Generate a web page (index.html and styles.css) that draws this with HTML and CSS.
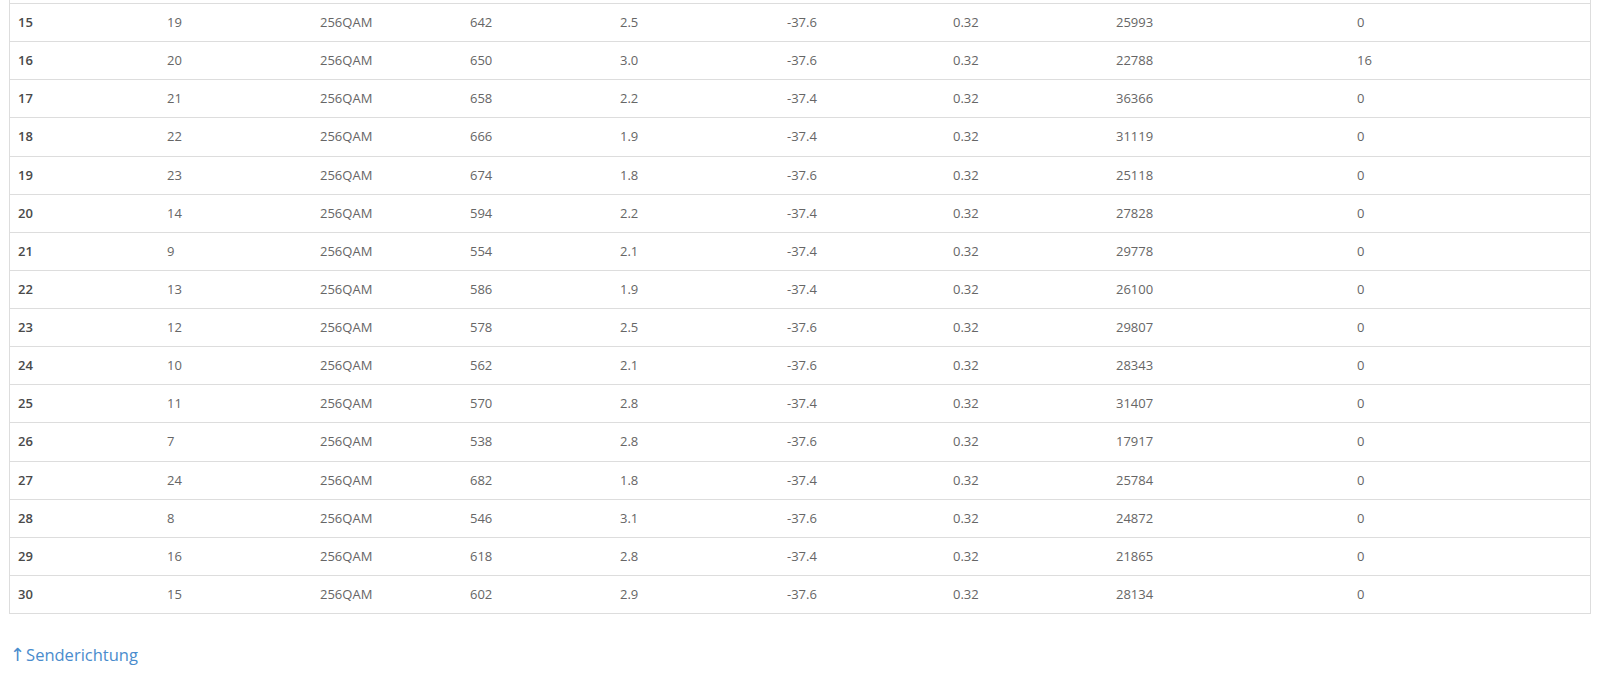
FILE: index.html
```html
<!DOCTYPE html>
<html lang="de">
<head>
<meta charset="utf-8">
<title>Kanäle</title>
<link rel="stylesheet" href="styles.css">
</head>
<body>
<div class="page">
  <div class="table-wrap">
    <table class="channels">
      <colgroup>
        <col class="c1"><col class="c2"><col class="c3"><col class="c4"><col class="c5"><col class="c6"><col class="c7"><col class="c8"><col class="c9">
      </colgroup>
      <tbody>
        <tr><th>15</th><td>19</td><td>256QAM</td><td>642</td><td>2.5</td><td>-37.6</td><td>0.32</td><td>25993</td><td>0</td></tr>
        <tr><th>16</th><td>20</td><td>256QAM</td><td>650</td><td>3.0</td><td>-37.6</td><td>0.32</td><td>22788</td><td>16</td></tr>
        <tr><th>17</th><td>21</td><td>256QAM</td><td>658</td><td>2.2</td><td>-37.4</td><td>0.32</td><td>36366</td><td>0</td></tr>
        <tr><th>18</th><td>22</td><td>256QAM</td><td>666</td><td>1.9</td><td>-37.4</td><td>0.32</td><td>31119</td><td>0</td></tr>
        <tr><th>19</th><td>23</td><td>256QAM</td><td>674</td><td>1.8</td><td>-37.6</td><td>0.32</td><td>25118</td><td>0</td></tr>
        <tr><th>20</th><td>14</td><td>256QAM</td><td>594</td><td>2.2</td><td>-37.4</td><td>0.32</td><td>27828</td><td>0</td></tr>
        <tr><th>21</th><td>9</td><td>256QAM</td><td>554</td><td>2.1</td><td>-37.4</td><td>0.32</td><td>29778</td><td>0</td></tr>
        <tr><th>22</th><td>13</td><td>256QAM</td><td>586</td><td>1.9</td><td>-37.4</td><td>0.32</td><td>26100</td><td>0</td></tr>
        <tr><th>23</th><td>12</td><td>256QAM</td><td>578</td><td>2.5</td><td>-37.6</td><td>0.32</td><td>29807</td><td>0</td></tr>
        <tr><th>24</th><td>10</td><td>256QAM</td><td>562</td><td>2.1</td><td>-37.6</td><td>0.32</td><td>28343</td><td>0</td></tr>
        <tr><th>25</th><td>11</td><td>256QAM</td><td>570</td><td>2.8</td><td>-37.4</td><td>0.32</td><td>31407</td><td>0</td></tr>
        <tr><th>26</th><td>7</td><td>256QAM</td><td>538</td><td>2.8</td><td>-37.6</td><td>0.32</td><td>17917</td><td>0</td></tr>
        <tr><th>27</th><td>24</td><td>256QAM</td><td>682</td><td>1.8</td><td>-37.4</td><td>0.32</td><td>25784</td><td>0</td></tr>
        <tr><th>28</th><td>8</td><td>256QAM</td><td>546</td><td>3.1</td><td>-37.6</td><td>0.32</td><td>24872</td><td>0</td></tr>
        <tr><th>29</th><td>16</td><td>256QAM</td><td>618</td><td>2.8</td><td>-37.4</td><td>0.32</td><td>21865</td><td>0</td></tr>
        <tr><th>30</th><td>15</td><td>256QAM</td><td>602</td><td>2.9</td><td>-37.6</td><td>0.32</td><td>28134</td><td>0</td></tr>
      </tbody>
    </table>
  </div>
  <h3 class="section-link"><a href="#senderichtung"><span class="arrow">↑</span>Senderichtung</a></h3>
</div>
</body>
</html>
```
FILE: styles.css
```css
html, body {
  margin: 0;
  padding: 0;
  background: #ffffff;
}

body {
  font-family: "Open Sans", "Liberation Sans", sans-serif;
  font-size: 13px;
  color: #666666;
}

.page {
  padding: 0 8px 0 9px;
}

.table-wrap {
  border-left: 1px solid #dddddd;
  border-right: 1px solid #dddddd;
  border-bottom: 1px solid #dddddd;
  padding-top: 3px;
}

.channels {
  width: 100%;
  border-collapse: collapse;
  table-layout: fixed;
}

.channels col.c1 { width: 149px; }
.channels col.c2 { width: 153px; }
.channels col.c3 { width: 150px; }
.channels col.c4 { width: 150px; }
.channels col.c5 { width: 167px; }
.channels col.c6 { width: 166px; }
.channels col.c7 { width: 163px; }
.channels col.c8 { width: 241px; }
.channels col.c9 { width: auto; }

.channels tr {
  border-top: 1px solid #dddddd;
}

.channels th,
.channels td {
  padding: 8px 8px;
  line-height: 21.12px;
  height: 21.12px;
  text-align: left;
  vertical-align: middle;
  white-space: nowrap;
}

.channels th {
  font-weight: 600;
  color: #4a4a4a;
}

.channels td {
  font-weight: 400;
  color: #666666;
}

.section-link {
  margin: 29px 0 0 1px;
  font-size: 16.5px;
  font-weight: 400;
  line-height: 23px;
}

.section-link a {
  color: #4a8ccd;
  text-decoration: none;
}

.section-link .arrow {
  font-family: "DejaVu Sans", sans-serif;
  font-size: 18px;
  margin-right: 1px;
}
```
